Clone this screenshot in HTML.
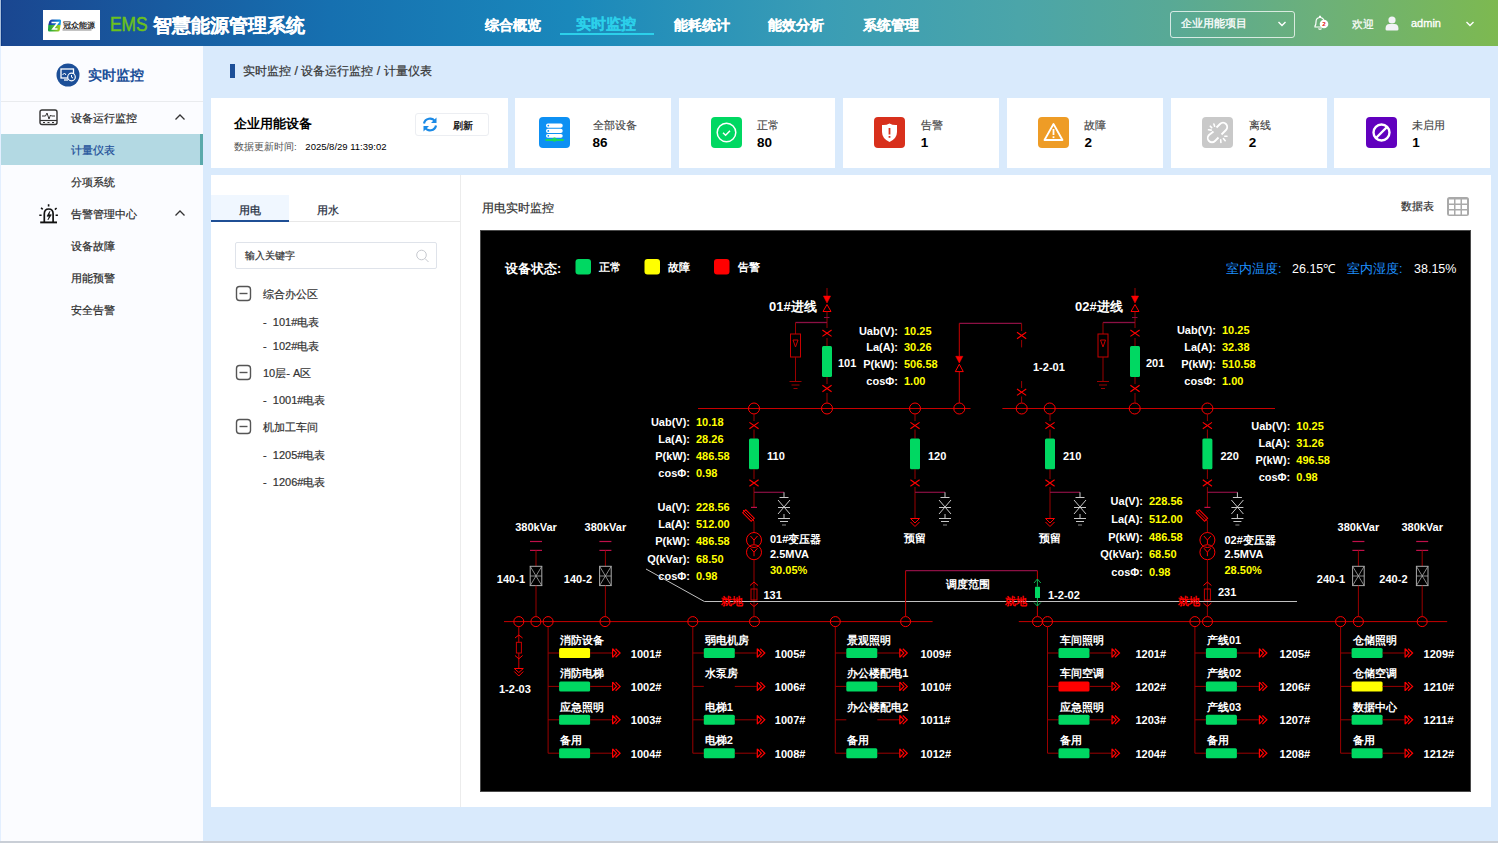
<!DOCTYPE html><html><head><meta charset="utf-8"><style>
*{box-sizing:border-box;margin:0;padding:0}
html,body{width:1498px;height:843px;overflow:hidden}
body{position:relative;background:#d9eafc;font-family:"Liberation Sans",sans-serif;color:#333}
.a{position:absolute;white-space:nowrap}
#hdr{left:0;top:0;width:1498px;height:46px;background:linear-gradient(90deg,#1a4690 0%,#1670b0 22%,#1a88bb 38%,#3a9db5 55%,#4ba5a9 68%,#58a996 78%,#6cb07a 88%,#7db950 100%)}
.nav{top:16px;font-size:14px;font-weight:bold;color:#fff;line-height:18px;-webkit-text-stroke:0.2px currentColor}
#side{left:0;top:46px;width:203px;height:796px;background:#fbfcff;border-left:1px solid #e3efff}
.mi{left:71px;font-size:10.6px;color:#2a2a2a;line-height:14px;-webkit-text-stroke:0.2px currentColor}
.card{background:#fff;top:98px;height:69.5px}
.clab{font-size:11px;color:#444;line-height:13px;-webkit-text-stroke:0.15px currentColor}
.cval{font-size:13.5px;font-weight:bold;color:#000;line-height:15px}
.ico{width:31px;height:31px;border-radius:4px;top:19px;left:24px}
.tree{font-size:11px;color:#333;line-height:13px;-webkit-text-stroke:0.2px currentColor}
</style></head><body><div id="hdr" class="a">
<div class="a" style="left:43px;top:10px;width:57px;height:30px;background:#fff"></div>
<svg class="a" style="left:42px;top:9px" width="58" height="32" viewBox="0 0 58 32">
<defs><linearGradient id="lgb" x1="0" x2="1"><stop offset="0" stop-color="#1a2f9a"/><stop offset="1" stop-color="#12a0e8"/></linearGradient>
<linearGradient id="lgg" x1="0" x2="1"><stop offset="0" stop-color="#10a040"/><stop offset="1" stop-color="#a8d020"/></linearGradient></defs>
<path d="M8.5 11 Q9 10.5 10 10.5 L18 10.5 Q19.2 10.5 19 12 L18.6 16 L6.3 16 L7.2 12.5 Z" fill="url(#lgb)"/>
<path d="M6.3 16 L18.6 16 L17.8 21 Q17.5 22.5 16 22.5 L7.5 22.5 Q5.8 22.5 6 21 Z" fill="url(#lgg)"/>
<path d="M9.5 13.5 L16 13.5 L11 20 L15.5 20" stroke="#fff" stroke-width="1.7" fill="none"/>
<text x="20.5" y="19" font-size="7.6" font-weight="bold" fill="#2a2a2a" letter-spacing="0.3">冠众能源</text>
<rect x="20.5" y="20.4" width="29" height="1.1" fill="#8a8a8a"/>
</svg>
<div class="a" style="left:110px;top:12px;font-size:20px;line-height:24px;color:#6cc11c;-webkit-text-stroke:0.5px #6cc11c;transform:scaleX(0.87);transform-origin:0 0">EMS</div>
<div class="a" style="left:153px;top:14.5px;font-size:18.8px;font-weight:bold;line-height:22px;color:#fff;-webkit-text-stroke:0.15px #fff">智慧能源管理系统</div>
<div class="a nav" style="left:485px">综合概览</div>
<div class="a nav" style="left:576px;color:#2cd0ea;font-size:15.2px;top:15px">实时监控</div>
<div class="a nav" style="left:674px">能耗统计</div>
<div class="a nav" style="left:768px">能效分析</div>
<div class="a nav" style="left:863px">系统管理</div>
<div class="a" style="left:560px;top:33px;width:94px;height:2px;background:#2cd0ea"></div>
<div class="a" style="left:1170px;top:11px;width:125px;height:27px;border:1px solid rgba(255,255,255,0.75);border-radius:3px"></div>
<div class="a" style="left:1181px;top:16px;font-size:11px;color:#fff;line-height:14px;-webkit-text-stroke:0.3px #fff">企业用能项目</div>
<svg class="a" style="left:1277px;top:20px" width="10" height="8"><path d="M1.5 2 L5 5.5 L8.5 2" stroke="#fff" stroke-width="1.4" fill="none"/></svg>
<svg class="a" style="left:1312px;top:14px" width="18" height="18" viewBox="0 0 18 18">
<path d="M3 13 L3 12 Q4 11 4 8 Q4 4 7.5 3.5 L7.5 2.5 Q8 2 8.5 2.5 L8.5 3.5 Q12 4 12 8 Q12 11 13 12 L13 13 Z" fill="none" stroke="#fff" stroke-width="1.2"/>
<path d="M6.5 14.5 Q8 16 9.5 14.5" stroke="#fff" stroke-width="1.1" fill="none"/>
<circle cx="12" cy="10" r="4.3" fill="#fff"/>
<text x="12" y="12.2" font-size="6.2" font-weight="bold" fill="#e01010" text-anchor="middle" font-family="Liberation Sans">2</text>
</svg>
<div class="a" style="left:1352px;top:17px;font-size:11px;color:#fff;line-height:14px;-webkit-text-stroke:0.2px #fff">欢迎</div>
<svg class="a" style="left:1385px;top:16px" width="14" height="15" viewBox="0 0 14 15">
<circle cx="7" cy="4" r="3.6" fill="#f2f2f7"/>
<path d="M0.5 13 Q0.5 8 4.5 8 L9.5 8 Q13.5 8 13.5 13 Q13.5 14.5 12 14.5 L2 14.5 Q0.5 14.5 0.5 13 Z" fill="#f2f2f7"/>
</svg>
<div class="a" style="left:1411px;top:16px;font-size:11px;color:#fff;line-height:14px;-webkit-text-stroke:0.3px #fff">admin</div>
<svg class="a" style="left:1465px;top:20px" width="10" height="8"><path d="M1.5 2 L5 5.5 L8.5 2" stroke="#fff" stroke-width="1.4" fill="none"/></svg>
<div class="a" style="left:0;top:0;width:1px;height:46px;background:#a9bedb"></div><div class="a" style="left:1px;top:0;width:1px;height:46px;background:#0d3a86"></div>
</div>
<div id="side" class="a">
</div>
<div class="a" style="left:1px;top:101px;width:202px;height:1px;background:#e9ebee"></div>
<svg class="a" style="left:55.7px;top:63px" width="24" height="24" viewBox="0 0 24 24">
<circle cx="12" cy="12" r="11.5" fill="#1c4f98"/>
<rect x="5" y="6" width="12.5" height="9" fill="none" stroke="#fff" stroke-width="1.3"/>
<path d="M6.5 12 L8.5 10 L10 12" stroke="#fff" stroke-width="1" fill="none"/>
<path d="M8 17 L12 17" stroke="#fff" stroke-width="1.3"/>
<circle cx="15.5" cy="14" r="3.8" fill="#1c4f98" stroke="#fff" stroke-width="1.2"/>
<path d="M15.5 12 L15.5 14.2 L17 15" stroke="#fff" stroke-width="1" fill="none"/>
</svg>
<div class="a" style="left:88px;top:67px;font-size:14px;font-weight:bold;color:#1c4f98;line-height:17px">实时监控</div>
<svg class="a" style="left:39px;top:109px" width="20" height="17" viewBox="0 0 20 17">
<rect x="1" y="1" width="17" height="14.5" rx="2" fill="none" stroke="#333" stroke-width="1.4"/>
<path d="M3 7 L6.5 7 L8 4 L10 10 L11.5 6 L12.5 7 L16 7" stroke="#333" stroke-width="1" fill="none"/>
<path d="M1 11.5 L18 11.5" stroke="#333" stroke-width="1.2"/>
<path d="M4 13.5 L6 13.5 M8.5 13.5 L10.5 13.5 M13 13.5 L15 13.5" stroke="#333" stroke-width="1"/>
</svg>
<div class="a mi" style="top:111px">设备运行监控</div>
<svg class="a" style="left:174px;top:113px" width="12" height="9"><path d="M1.5 6.5 L6 2 L10.5 6.5" stroke="#333" stroke-width="1.3" fill="none"/></svg>
<div class="a" style="left:1px;top:134px;width:199px;height:31px;background:#b3d9e3"></div>
<div class="a" style="left:200px;top:134px;width:3px;height:31px;background:#5aa9ab"></div>
<div class="a mi" style="top:143px;color:#1d4d97">计量仪表</div>
<div class="a mi" style="top:175px">分项系统</div>
<svg class="a" style="left:39px;top:204px" width="20" height="20" viewBox="0 0 20 20">
<path d="M5.3 18 L5.3 10 Q5.3 5 9.7 5 Q14.1 5 14.1 10 L14.1 18" fill="none" stroke="#111" stroke-width="1.7"/>
<path d="M1.2 18.4 L18 18.4" stroke="#111" stroke-width="1.9"/>
<path d="M10.8 7.4 L8 12.2 L10.4 12.2 L9 15.8 L12.3 10.8 L9.9 10.8 Z" fill="#111" stroke="#111" stroke-width="0.7" stroke-linejoin="round"/>
<path d="M9.6 0.3 L9.6 2.5 M2.1 3.8 L3.7 5.4 M17.6 4 L15.9 5.6 M0.3 11.3 L2.6 11.3 M16.6 11.3 L18.9 11.3" stroke="#111" stroke-width="1.6"/>
</svg>
<div class="a mi" style="top:207px">告警管理中心</div>
<svg class="a" style="left:174px;top:209px" width="12" height="9"><path d="M1.5 6.5 L6 2 L10.5 6.5" stroke="#333" stroke-width="1.3" fill="none"/></svg>
<div class="a mi" style="top:239px">设备故障</div>
<div class="a mi" style="top:271px">用能预警</div>
<div class="a mi" style="top:303px">安全告警</div>
<div class="a" style="left:0;top:841px;width:1498px;height:2px;background:#c9ced6"></div>
<div class="a" style="left:230px;top:64px;width:5px;height:14px;background:#1c4f98"></div>
<div class="a" style="left:243px;top:64px;font-size:12.4px;color:#333;line-height:15px;-webkit-text-stroke:0.2px #333">实时监控 / 设备运行监控 / 计量仪表</div>
<div class="a card" style="left:211px;width:297px">
<div class="a" style="left:23px;top:19px;font-size:12.5px;font-weight:bold;color:#000;line-height:15px">企业用能设备</div>
<div class="a" style="left:23px;top:43px;font-size:9.6px;color:#555;line-height:12px">数据更新时间: <span style="color:#000;font-size:9.5px;margin-left:6px">2025/8/29 11:39:02</span></div>
<div class="a" style="left:204px;top:15px;width:74px;height:23px;border:1px solid #eceef2;border-radius:3px"></div>
<svg class="a" style="left:211px;top:19px" width="16" height="15" viewBox="0 0 16 15">
<path d="M2 6.5 A6 6 0 0 1 13 4.5" stroke="#1b8ae6" stroke-width="2.2" fill="none"/>
<path d="M14.5 0.5 L14.5 6 L9 6 Z" fill="#1b8ae6"/>
<path d="M14 8.5 A6 6 0 0 1 3 10.5" stroke="#1b8ae6" stroke-width="2.2" fill="none"/>
<path d="M1.5 14.5 L1.5 9 L7 9 Z" fill="#1b8ae6"/>
</svg>
<div class="a" style="left:242px;top:22px;font-size:9.6px;font-weight:bold;color:#222;line-height:12px">刷新</div>
</div>
<div class="a card" style="left:515px;width:156px"></div>
<svg class="a" style="left:538.6px;top:117px;background:#0d90f3;border-radius:4px" width="31" height="31" viewBox="0 0 31 31"><rect x="7" y="6.5" width="16.7" height="4.3" rx="2" fill="#fff"/><rect x="7" y="11.8" width="16.7" height="4.2" rx="2" fill="#fff"/><rect x="7" y="16.9" width="16.7" height="3.9" rx="1.8" fill="#fff"/>
<circle cx="9.3" cy="8.6" r="0.9" fill="#0d90f3"/><circle cx="9.3" cy="13.9" r="0.9" fill="#0d90f3"/><circle cx="9.3" cy="18.8" r="0.9" fill="#0d90f3"/>
<rect x="6.5" y="22" width="18.2" height="2" fill="#19d660"/><circle cx="15.5" cy="22.6" r="2.2" fill="#19d660"/></svg>
<div class="a clab" style="left:592.5px;top:119px">全部设备</div>
<div class="a cval" style="left:592.5px;top:134.5px">86</div>
<div class="a card" style="left:679px;width:156px"></div>
<svg class="a" style="left:710.5px;top:117px;background:#00d862;border-radius:4px" width="31" height="31" viewBox="0 0 31 31"><circle cx="15.5" cy="15.5" r="9.3" fill="none" stroke="#fff" stroke-width="1.5"/><path d="M12 15.8 L14.6 18.2 L19 13.8" fill="none" stroke="#fff" stroke-width="1.5"/></svg>
<div class="a clab" style="left:757px;top:119px">正常</div>
<div class="a cval" style="left:757px;top:134.5px">80</div>
<div class="a card" style="left:843px;width:156px"></div>
<svg class="a" style="left:873.8px;top:117px;background:#d8301c;border-radius:4px" width="31" height="31" viewBox="0 0 31 31"><path d="M15.5 6.5 Q19 8.5 23 8 L23 15 Q23 21.5 15.5 25 Q8 21.5 8 15 L8 8 Q12 8.5 15.5 6.5 Z" fill="#fff"/><rect x="14.6" y="11" width="1.8" height="6.5" fill="#d8301c"/><rect x="14.6" y="19" width="1.8" height="1.8" fill="#d8301c"/></svg>
<div class="a clab" style="left:920.8px;top:119px">告警</div>
<div class="a cval" style="left:920.8px;top:134.5px">1</div>
<div class="a card" style="left:1006.5px;width:156px"></div>
<svg class="a" style="left:1038px;top:117px;background:#ee9c26;border-radius:4px" width="31" height="31" viewBox="0 0 31 31"><path d="M15.5 7 L24.5 23 L6.5 23 Z" fill="none" stroke="#fff" stroke-width="1.8" stroke-linejoin="round"/><rect x="14.6" y="12" width="1.8" height="6" fill="#fff"/><rect x="14.6" y="19.3" width="1.8" height="1.8" fill="#fff"/></svg>
<div class="a clab" style="left:1084.4px;top:119px">故障</div>
<div class="a cval" style="left:1084.4px;top:134.5px">2</div>
<div class="a card" style="left:1170.5px;width:156px"></div>
<svg class="a" style="left:1201.8px;top:117px;background:#c9c9c9;border-radius:4px" width="31" height="31" viewBox="0 0 31 31"><path d="M14.5 10.5 L18 7 A4.2 4.2 0 0 1 24 13 L19.5 17.5 M11.5 14.5 L7 18 A4.2 4.2 0 0 0 13 24 L16.5 20.5" fill="none" stroke="#fff" stroke-width="1.8"/><path d="M8.3 9.2 L9.7 10.6 M11.9 7 L12.6 9.2 M6.5 12.8 L9.2 13.1 M22.8 19.2 L25 19.2 M21.4 21.6 L23.2 23.7 M18.7 22.8 L18.9 25.5" stroke="#fff" stroke-width="1.6" stroke-linecap="round"/></svg>
<div class="a clab" style="left:1248.8px;top:119px">离线</div>
<div class="a cval" style="left:1248.8px;top:134.5px">2</div>
<div class="a card" style="left:1334px;width:156px"></div>
<svg class="a" style="left:1365.7px;top:117px;background:#6100be;border-radius:4px" width="31" height="31" viewBox="0 0 31 31"><circle cx="15.5" cy="15.5" r="8" fill="none" stroke="#fff" stroke-width="2.4"/><path d="M10 21 L21 10" stroke="#fff" stroke-width="2.4"/></svg>
<div class="a clab" style="left:1412.2px;top:119px">未启用</div>
<div class="a cval" style="left:1412.2px;top:134.5px">1</div>
<div class="a" style="left:211px;top:175px;width:1280px;height:632px;background:#fff"></div>
<div class="a" style="left:460px;top:175px;width:1px;height:632px;background:#ececec"></div>
<div class="a" style="left:211px;top:195px;width:78px;height:27px;background:#f0f7ff"></div>
<div class="a" style="left:211px;top:221px;width:249px;height:1px;background:#e8e8e8"></div>
<div class="a" style="left:211px;top:220px;width:78px;height:2px;background:#1f4f95"></div>
<div class="a" style="left:239px;top:204px;font-size:11px;color:#1f2d3d;line-height:13px;-webkit-text-stroke:0.25px #1f2d3d">用电</div>
<div class="a" style="left:317px;top:204px;font-size:11px;color:#1f2d3d;line-height:13px;-webkit-text-stroke:0.25px #1f2d3d">用水</div>
<div class="a" style="left:235px;top:242px;width:202px;height:27px;border:1px solid #dfe3ea;border-radius:2px"></div>
<div class="a" style="left:245px;top:250px;font-size:10px;color:#333;line-height:12px;-webkit-text-stroke:0.2px #333">输入关键字</div>
<svg class="a" style="left:415px;top:249px" width="15" height="14"><circle cx="6.5" cy="6" r="4.8" fill="none" stroke="#c6c9cf" stroke-width="1"/><path d="M10 9.5 L13.5 13" stroke="#c6c9cf" stroke-width="1"/></svg>
<svg class="a" style="left:235px;top:285px" width="17" height="17"><rect x="1.5" y="1.5" width="14" height="14" rx="3" fill="none" stroke="#555" stroke-width="1.4"/><path d="M4.5 8.5 L12.5 8.5" stroke="#555" stroke-width="1.4"/></svg>
<div class="a tree" style="left:263px;top:287.5px">综合办公区</div>
<div class="a tree" style="left:263px;top:315.5px">-&nbsp; 101#电表</div>
<div class="a tree" style="left:263px;top:339.5px">-&nbsp; 102#电表</div>
<svg class="a" style="left:235px;top:364px" width="17" height="17"><rect x="1.5" y="1.5" width="14" height="14" rx="3" fill="none" stroke="#555" stroke-width="1.4"/><path d="M4.5 8.5 L12.5 8.5" stroke="#555" stroke-width="1.4"/></svg>
<div class="a tree" style="left:263px;top:366.5px">10层- A区</div>
<div class="a tree" style="left:263px;top:393.5px">-&nbsp; 1001#电表</div>
<svg class="a" style="left:235px;top:418px" width="17" height="17"><rect x="1.5" y="1.5" width="14" height="14" rx="3" fill="none" stroke="#555" stroke-width="1.4"/><path d="M4.5 8.5 L12.5 8.5" stroke="#555" stroke-width="1.4"/></svg>
<div class="a tree" style="left:263px;top:420.5px">机加工车间</div>
<div class="a tree" style="left:263px;top:448.5px">-&nbsp; 1205#电表</div>
<div class="a tree" style="left:263px;top:475.5px">-&nbsp; 1206#电表</div>
<div class="a" style="left:482px;top:201px;font-size:12px;color:#333;line-height:15px;-webkit-text-stroke:0.2px #333">用电实时监控</div>
<div class="a" style="left:1401px;top:200px;font-size:10.5px;color:#333;line-height:13px;-webkit-text-stroke:0.2px #333">数据表</div>
<svg class="a" style="left:1446px;top:196px" width="25" height="22" viewBox="0 0 25 22">
<rect x="1" y="1" width="22" height="19" rx="2.5" fill="#a9a9a9"/>
<g fill="#fff"><rect x="3" y="3.5" width="5" height="4"/><rect x="9.5" y="3.5" width="5" height="4"/><rect x="16" y="3.5" width="5" height="4"/>
<rect x="3" y="9" width="5" height="4"/><rect x="9.5" y="9" width="5" height="4"/><rect x="16" y="9" width="5" height="4"/>
<rect x="3" y="14.5" width="5" height="4"/><rect x="9.5" y="14.5" width="5" height="4"/><rect x="16" y="14.5" width="5" height="4"/></g>
</svg>
<div class="a" style="left:480px;top:230px;width:991px;height:562px;border:1px solid #4a4a4a;background:#000"></div>
<svg class="a" style="left:480px;top:230px" width="991" height="562" viewBox="480 230 991 562" font-family="Liberation Sans, sans-serif">
<text x="505" y="273" fill="#fff" font-size="12.5" text-anchor="start" font-weight="bold">设备状态:</text>
<rect x="575.5" y="259" width="15.5" height="15.5" rx="3" fill="#00d862"/>
<text x="599" y="271" fill="#fff" font-size="11" text-anchor="start" font-weight="bold">正常</text>
<rect x="644.5" y="259" width="15.5" height="15.5" rx="3" fill="#ffff00"/>
<text x="668" y="271" fill="#fff" font-size="11" text-anchor="start" font-weight="bold">故障</text>
<rect x="714" y="259" width="15.5" height="15.5" rx="3" fill="#ff0000"/>
<text x="738" y="271" fill="#fff" font-size="11" text-anchor="start" font-weight="bold">告警</text>
<text x="1226" y="273" fill="#1e90ff" font-size="12.5" text-anchor="start" font-weight="normal">室内温度:</text>
<text x="1292" y="273" fill="#fff" font-size="12.5" text-anchor="start" font-weight="normal">26.15℃</text>
<text x="1347" y="273" fill="#1e90ff" font-size="12.5" text-anchor="start" font-weight="normal">室内湿度:</text>
<text x="1414" y="273" fill="#fff" font-size="12.5" text-anchor="start" font-weight="normal">38.15%</text>
<line x1="698" y1="408.5" x2="970.5" y2="408.5" stroke="#c80000" stroke-width="1"/>
<line x1="1002.4" y1="408.5" x2="1275" y2="408.5" stroke="#c80000" stroke-width="1"/>
<circle cx="754" cy="408.5" r="5.5" fill="none" stroke="#ff0000" stroke-width="1"/>
<circle cx="827" cy="408.5" r="5.5" fill="none" stroke="#ff0000" stroke-width="1"/>
<circle cx="915" cy="408.5" r="5.5" fill="none" stroke="#ff0000" stroke-width="1"/>
<circle cx="959.3" cy="408.5" r="5.5" fill="none" stroke="#ff0000" stroke-width="1"/>
<circle cx="1021.7" cy="408.5" r="5.5" fill="none" stroke="#ff0000" stroke-width="1"/>
<circle cx="1049.7" cy="408.5" r="5.5" fill="none" stroke="#ff0000" stroke-width="1"/>
<circle cx="1134.7" cy="408.5" r="5.5" fill="none" stroke="#ff0000" stroke-width="1"/>
<circle cx="1207.4" cy="408.5" r="5.5" fill="none" stroke="#ff0000" stroke-width="1"/>
<line x1="827" y1="288" x2="827" y2="296" stroke="#9a0000" stroke-width="1"/>
<path d="M823.4 296 L830.6 296 L827 303 Z" stroke="#ff0000" fill="#ff0000" stroke-width="0.5"/>
<path d="M827 304.5 L823 311.5 L831 311.5 Z" stroke="#ff0000" fill="none" stroke-width="1"/>
<line x1="827" y1="311.5" x2="827" y2="328" stroke="#9a0000" stroke-width="1"/>
<line x1="824" y1="317.5" x2="829.5" y2="317.5" stroke="#8c1044" stroke-width="1"/>
<line x1="795.5" y1="322.5" x2="827" y2="322.5" stroke="#8c1044" stroke-width="1.3"/>
<line x1="795.5" y1="322.5" x2="795.5" y2="334" stroke="#9a0000" stroke-width="1"/>
<rect x="790.5" y="334" width="10" height="23" fill="none" stroke="#c80000" stroke-width="1"/>
<path d="M793.0 340 L798.0 340 L795.5 347 Z" stroke="#c80000" fill="none" stroke-width="1"/>
<line x1="795.5" y1="357" x2="795.5" y2="381" stroke="#9a0000" stroke-width="1"/>
<line x1="789.5" y1="381.5" x2="801.5" y2="381.5" stroke="#9a0000" stroke-width="1"/>
<line x1="791.5" y1="385" x2="799.5" y2="385" stroke="#9a0000" stroke-width="1"/>
<line x1="793.5" y1="388.5" x2="797.5" y2="388.5" stroke="#9a0000" stroke-width="1"/>
<path d="M822.4 330.0 L831.6 336.4 M822.4 336.4 L831.6 330.0" stroke="#ff0000" stroke-width="1.1"/>
<line x1="827" y1="338" x2="827" y2="346" stroke="#9a0000" stroke-width="1"/>
<rect x="822" y="346" width="10" height="31" rx="1.5" fill="#00d862"/>
<line x1="827" y1="377" x2="827" y2="384" stroke="#9a0000" stroke-width="1"/>
<path d="M822.4 385.3 L831.6 391.7 M822.4 391.7 L831.6 385.3" stroke="#ff0000" stroke-width="1.1"/>
<line x1="827" y1="393" x2="827" y2="403" stroke="#9a0000" stroke-width="1"/>
<text x="769" y="311" fill="#fff" font-size="13" text-anchor="start" font-weight="bold">01#进线</text>
<text x="838" y="366.5" fill="#fff" font-size="11" text-anchor="start" font-weight="bold">101</text>
<line x1="1135" y1="288" x2="1135" y2="296" stroke="#9a0000" stroke-width="1"/>
<path d="M1131.4 296 L1138.6 296 L1135 303 Z" stroke="#ff0000" fill="#ff0000" stroke-width="0.5"/>
<path d="M1135 304.5 L1131 311.5 L1139 311.5 Z" stroke="#ff0000" fill="none" stroke-width="1"/>
<line x1="1135" y1="311.5" x2="1135" y2="328" stroke="#9a0000" stroke-width="1"/>
<line x1="1132" y1="317.5" x2="1137.5" y2="317.5" stroke="#8c1044" stroke-width="1"/>
<line x1="1103" y1="322.5" x2="1135" y2="322.5" stroke="#8c1044" stroke-width="1.3"/>
<line x1="1103" y1="322.5" x2="1103" y2="334" stroke="#9a0000" stroke-width="1"/>
<rect x="1098" y="334" width="10" height="23" fill="none" stroke="#c80000" stroke-width="1"/>
<path d="M1100.5 340 L1105.5 340 L1103 347 Z" stroke="#c80000" fill="none" stroke-width="1"/>
<line x1="1103" y1="357" x2="1103" y2="381" stroke="#9a0000" stroke-width="1"/>
<line x1="1097" y1="381.5" x2="1109" y2="381.5" stroke="#9a0000" stroke-width="1"/>
<line x1="1099" y1="385" x2="1107" y2="385" stroke="#9a0000" stroke-width="1"/>
<line x1="1101" y1="388.5" x2="1105" y2="388.5" stroke="#9a0000" stroke-width="1"/>
<path d="M1130.4 330.0 L1139.6 336.4 M1130.4 336.4 L1139.6 330.0" stroke="#ff0000" stroke-width="1.1"/>
<line x1="1135" y1="338" x2="1135" y2="346" stroke="#9a0000" stroke-width="1"/>
<rect x="1130" y="346" width="10" height="31" rx="1.5" fill="#00d862"/>
<line x1="1135" y1="377" x2="1135" y2="384" stroke="#9a0000" stroke-width="1"/>
<path d="M1130.4 385.3 L1139.6 391.7 M1130.4 391.7 L1139.6 385.3" stroke="#ff0000" stroke-width="1.1"/>
<line x1="1135" y1="393" x2="1135" y2="403" stroke="#9a0000" stroke-width="1"/>
<text x="1075" y="311" fill="#fff" font-size="13" text-anchor="start" font-weight="bold">02#进线</text>
<text x="1146" y="366.5" fill="#fff" font-size="11" text-anchor="start" font-weight="bold">201</text>
<line x1="959.3" y1="323.4" x2="1021.6" y2="323.4" stroke="#8c1044" stroke-width="1.3"/>
<line x1="959.3" y1="323.4" x2="959.3" y2="356" stroke="#c80000" stroke-width="1"/>
<path d="M955.7 356.3 L962.9 356.3 L959.3 363 Z" stroke="#ff0000" fill="#ff0000" stroke-width="0.5"/>
<path d="M959.3 364.2 L955.3 371.6 L963.3 371.6 Z" stroke="#ff0000" fill="none" stroke-width="1"/>
<line x1="959.3" y1="371.6" x2="959.3" y2="403" stroke="#c80000" stroke-width="1"/>
<line x1="1021.6" y1="323.4" x2="1021.6" y2="331" stroke="#9a0000" stroke-width="1"/>
<path d="M1017.0 332.3 L1026.2 338.7 M1017.0 338.7 L1026.2 332.3" stroke="#ff0000" stroke-width="1.1"/>
<line x1="1021.6" y1="340" x2="1021.6" y2="347.4" stroke="#9a0000" stroke-width="1"/>
<line x1="1021.6" y1="381" x2="1021.6" y2="388" stroke="#9a0000" stroke-width="1"/>
<path d="M1017.0 389.0 L1026.2 395.4 M1017.0 395.4 L1026.2 389.0" stroke="#ff0000" stroke-width="1.1"/>
<line x1="1021.6" y1="396.5" x2="1021.6" y2="403" stroke="#9a0000" stroke-width="1"/>
<text x="1033" y="370.5" fill="#fff" font-size="11" text-anchor="start" font-weight="bold">1-2-01</text>
<text x="898" y="334.5" fill="#fff" font-size="11" text-anchor="end" font-weight="bold">Uab(V):</text>
<text x="904" y="334.5" fill="#ffff00" font-size="11" text-anchor="start" font-weight="bold">10.25</text>
<text x="898" y="351.2" fill="#fff" font-size="11" text-anchor="end" font-weight="bold">La(A):</text>
<text x="904" y="351.2" fill="#ffff00" font-size="11" text-anchor="start" font-weight="bold">30.26</text>
<text x="898" y="368" fill="#fff" font-size="11" text-anchor="end" font-weight="bold">P(kW):</text>
<text x="904" y="368" fill="#ffff00" font-size="11" text-anchor="start" font-weight="bold">506.58</text>
<text x="898" y="384.5" fill="#fff" font-size="11" text-anchor="end" font-weight="bold">cosΦ:</text>
<text x="904" y="384.5" fill="#ffff00" font-size="11" text-anchor="start" font-weight="bold">1.00</text>
<text x="1216" y="334.3" fill="#fff" font-size="11" text-anchor="end" font-weight="bold">Uab(V):</text>
<text x="1222" y="334.3" fill="#ffff00" font-size="11" text-anchor="start" font-weight="bold">10.25</text>
<text x="1216" y="351.4" fill="#fff" font-size="11" text-anchor="end" font-weight="bold">La(A):</text>
<text x="1222" y="351.4" fill="#ffff00" font-size="11" text-anchor="start" font-weight="bold">32.38</text>
<text x="1216" y="368" fill="#fff" font-size="11" text-anchor="end" font-weight="bold">P(kW):</text>
<text x="1222" y="368" fill="#ffff00" font-size="11" text-anchor="start" font-weight="bold">510.58</text>
<text x="1216" y="385" fill="#fff" font-size="11" text-anchor="end" font-weight="bold">cosΦ:</text>
<text x="1222" y="385" fill="#ffff00" font-size="11" text-anchor="start" font-weight="bold">1.00</text>
<text x="690" y="426.2" fill="#fff" font-size="11" text-anchor="end" font-weight="bold">Uab(V):</text>
<text x="696" y="426.2" fill="#ffff00" font-size="11" text-anchor="start" font-weight="bold">10.18</text>
<text x="690" y="443.2" fill="#fff" font-size="11" text-anchor="end" font-weight="bold">La(A):</text>
<text x="696" y="443.2" fill="#ffff00" font-size="11" text-anchor="start" font-weight="bold">28.26</text>
<text x="690" y="460.1" fill="#fff" font-size="11" text-anchor="end" font-weight="bold">P(kW):</text>
<text x="696" y="460.1" fill="#ffff00" font-size="11" text-anchor="start" font-weight="bold">486.58</text>
<text x="690" y="477.1" fill="#fff" font-size="11" text-anchor="end" font-weight="bold">cosΦ:</text>
<text x="696" y="477.1" fill="#ffff00" font-size="11" text-anchor="start" font-weight="bold">0.98</text>
<text x="690" y="511" fill="#fff" font-size="11" text-anchor="end" font-weight="bold">Ua(V):</text>
<text x="696" y="511" fill="#ffff00" font-size="11" text-anchor="start" font-weight="bold">228.56</text>
<text x="690" y="528" fill="#fff" font-size="11" text-anchor="end" font-weight="bold">La(A):</text>
<text x="696" y="528" fill="#ffff00" font-size="11" text-anchor="start" font-weight="bold">512.00</text>
<text x="690" y="545" fill="#fff" font-size="11" text-anchor="end" font-weight="bold">P(kW):</text>
<text x="696" y="545" fill="#ffff00" font-size="11" text-anchor="start" font-weight="bold">486.58</text>
<text x="690" y="562.7" fill="#fff" font-size="11" text-anchor="end" font-weight="bold">Q(kVar):</text>
<text x="696" y="562.7" fill="#ffff00" font-size="11" text-anchor="start" font-weight="bold">68.50</text>
<text x="690" y="580.2" fill="#fff" font-size="11" text-anchor="end" font-weight="bold">cosΦ:</text>
<text x="696" y="580.2" fill="#ffff00" font-size="11" text-anchor="start" font-weight="bold">0.98</text>
<text x="1290.3" y="430.2" fill="#fff" font-size="11" text-anchor="end" font-weight="bold">Uab(V):</text>
<text x="1296.3" y="430.2" fill="#ffff00" font-size="11" text-anchor="start" font-weight="bold">10.25</text>
<text x="1290.3" y="447.2" fill="#fff" font-size="11" text-anchor="end" font-weight="bold">La(A):</text>
<text x="1296.3" y="447.2" fill="#ffff00" font-size="11" text-anchor="start" font-weight="bold">31.26</text>
<text x="1290.3" y="464.2" fill="#fff" font-size="11" text-anchor="end" font-weight="bold">P(kW):</text>
<text x="1296.3" y="464.2" fill="#ffff00" font-size="11" text-anchor="start" font-weight="bold">496.58</text>
<text x="1290.3" y="481.1" fill="#fff" font-size="11" text-anchor="end" font-weight="bold">cosΦ:</text>
<text x="1296.3" y="481.1" fill="#ffff00" font-size="11" text-anchor="start" font-weight="bold">0.98</text>
<text x="1143" y="505.3" fill="#fff" font-size="11" text-anchor="end" font-weight="bold">Ua(V):</text>
<text x="1149" y="505.3" fill="#ffff00" font-size="11" text-anchor="start" font-weight="bold">228.56</text>
<text x="1143" y="523.3" fill="#fff" font-size="11" text-anchor="end" font-weight="bold">La(A):</text>
<text x="1149" y="523.3" fill="#ffff00" font-size="11" text-anchor="start" font-weight="bold">512.00</text>
<text x="1143" y="541" fill="#fff" font-size="11" text-anchor="end" font-weight="bold">P(kW):</text>
<text x="1149" y="541" fill="#ffff00" font-size="11" text-anchor="start" font-weight="bold">486.58</text>
<text x="1143" y="558" fill="#fff" font-size="11" text-anchor="end" font-weight="bold">Q(kVar):</text>
<text x="1149" y="558" fill="#ffff00" font-size="11" text-anchor="start" font-weight="bold">68.50</text>
<text x="1143" y="575.8" fill="#fff" font-size="11" text-anchor="end" font-weight="bold">cosΦ:</text>
<text x="1149" y="575.8" fill="#ffff00" font-size="11" text-anchor="start" font-weight="bold">0.98</text>
<line x1="754" y1="414" x2="754" y2="421" stroke="#9a0000" stroke-width="1"/>
<path d="M749.4 422.40000000000003 L758.6 428.8 M749.4 428.8 L758.6 422.40000000000003" stroke="#ff0000" stroke-width="1.1"/>
<line x1="754" y1="429.5" x2="754" y2="438.6" stroke="#9a0000" stroke-width="1"/>
<rect x="749" y="438.6" width="10" height="30.6" rx="1.5" fill="#00d862"/>
<line x1="754" y1="469.2" x2="754" y2="479" stroke="#9a0000" stroke-width="1"/>
<path d="M749.4 479.8 L758.6 486.2 M749.4 486.2 L758.6 479.8" stroke="#ff0000" stroke-width="1.1"/>
<line x1="754" y1="487" x2="754" y2="507.4" stroke="#9a0000" stroke-width="1"/>
<line x1="754" y1="492.3" x2="784" y2="492.3" stroke="#8c1044" stroke-width="1.2"/>
<line x1="784" y1="492.3" x2="784" y2="497.5" stroke="#c8c8c8" stroke-width="1"/>
<line x1="779.5" y1="497.5" x2="788.5" y2="497.5" stroke="#c8c8c8" stroke-width="1"/>
<path d="M778 500 L790 514 M778 514 L790 500 M778 507.5 L790 507.5" stroke="#c8c8c8" fill="none" stroke-width="1"/>
<line x1="784" y1="514" x2="784" y2="518.5" stroke="#c8c8c8" stroke-width="1"/>
<line x1="778" y1="518.5" x2="790" y2="518.5" stroke="#c8c8c8" stroke-width="1"/>
<line x1="780" y1="521.5" x2="788" y2="521.5" stroke="#c8c8c8" stroke-width="1"/>
<line x1="782" y1="525" x2="786" y2="525" stroke="#888" stroke-width="1"/>
<text x="767" y="460" fill="#fff" font-size="11" text-anchor="start" font-weight="bold">110</text>
<line x1="751" y1="507.4" x2="757" y2="507.4" stroke="#c0104a" stroke-width="1.2"/>
<line x1="743" y1="510" x2="754" y2="521" stroke="#ff0000" stroke-width="1"/>
<rect x="-6" y="-2.2" width="12" height="4.4" fill="none" stroke="#ff0000" stroke-width="1" transform="translate(748.5,515.5) rotate(45)"/>
<line x1="754" y1="521" x2="754" y2="532.5" stroke="#9a0000" stroke-width="1"/>
<circle cx="754" cy="540" r="7.5" fill="none" stroke="#ff0000" stroke-width="1"/>
<path d="M750.5 536 L754 540 L757.5 536 M754 540 L754 544" stroke="#ff0000" fill="none" stroke-width="1"/>
<circle cx="754" cy="552.2" r="7.5" fill="none" stroke="#ff0000" stroke-width="1"/>
<path d="M750.5 548.2 L754 552.2 L757.5 548.2 M754 552.2 L754 556.2" stroke="#ff0000" fill="none" stroke-width="1"/>
<line x1="754" y1="559.7" x2="754" y2="616" stroke="#9a0000" stroke-width="1"/>
<path d="M750 585.5 L754 582 L758 585.5" stroke="#ff0000" fill="none" stroke-width="1"/>
<rect x="751" y="589" width="6" height="11" fill="none" stroke="#c80000" stroke-width="1"/>
<path d="M750 603 L754 606.5 L758 603" stroke="#ff0000" fill="none" stroke-width="1"/>
<line x1="915" y1="414" x2="915" y2="421" stroke="#9a0000" stroke-width="1"/>
<path d="M910.4 422.40000000000003 L919.6 428.8 M910.4 428.8 L919.6 422.40000000000003" stroke="#ff0000" stroke-width="1.1"/>
<line x1="915" y1="429.5" x2="915" y2="438.6" stroke="#9a0000" stroke-width="1"/>
<rect x="910" y="438.6" width="10" height="30.6" rx="1.5" fill="#00d862"/>
<line x1="915" y1="469.2" x2="915" y2="479" stroke="#9a0000" stroke-width="1"/>
<path d="M910.4 479.8 L919.6 486.2 M910.4 486.2 L919.6 479.8" stroke="#ff0000" stroke-width="1.1"/>
<line x1="915" y1="487" x2="915" y2="518" stroke="#9a0000" stroke-width="1"/>
<line x1="915" y1="492.3" x2="945" y2="492.3" stroke="#8c1044" stroke-width="1.2"/>
<line x1="945" y1="492.3" x2="945" y2="497.5" stroke="#c8c8c8" stroke-width="1"/>
<line x1="940.5" y1="497.5" x2="949.5" y2="497.5" stroke="#c8c8c8" stroke-width="1"/>
<path d="M939 500 L951 514 M939 514 L951 500 M939 507.5 L951 507.5" stroke="#c8c8c8" fill="none" stroke-width="1"/>
<line x1="945" y1="514" x2="945" y2="518.5" stroke="#c8c8c8" stroke-width="1"/>
<line x1="939" y1="518.5" x2="951" y2="518.5" stroke="#c8c8c8" stroke-width="1"/>
<line x1="941" y1="521.5" x2="949" y2="521.5" stroke="#c8c8c8" stroke-width="1"/>
<line x1="943" y1="525" x2="947" y2="525" stroke="#888" stroke-width="1"/>
<text x="928" y="460" fill="#fff" font-size="11" text-anchor="start" font-weight="bold">120</text>
<path d="M910.5 518.5 L919.5 518.5 L915 523 Z M910.5 522 L915 526.5 L919.5 522" stroke="#ff0000" fill="none" stroke-width="1"/>
<line x1="1050" y1="414" x2="1050" y2="421" stroke="#9a0000" stroke-width="1"/>
<path d="M1045.4 422.40000000000003 L1054.6 428.8 M1045.4 428.8 L1054.6 422.40000000000003" stroke="#ff0000" stroke-width="1.1"/>
<line x1="1050" y1="429.5" x2="1050" y2="438.6" stroke="#9a0000" stroke-width="1"/>
<rect x="1045" y="438.6" width="10" height="30.6" rx="1.5" fill="#00d862"/>
<line x1="1050" y1="469.2" x2="1050" y2="479" stroke="#9a0000" stroke-width="1"/>
<path d="M1045.4 479.8 L1054.6 486.2 M1045.4 486.2 L1054.6 479.8" stroke="#ff0000" stroke-width="1.1"/>
<line x1="1050" y1="487" x2="1050" y2="518" stroke="#9a0000" stroke-width="1"/>
<line x1="1050" y1="492.3" x2="1080" y2="492.3" stroke="#8c1044" stroke-width="1.2"/>
<line x1="1080" y1="492.3" x2="1080" y2="497.5" stroke="#c8c8c8" stroke-width="1"/>
<line x1="1075.5" y1="497.5" x2="1084.5" y2="497.5" stroke="#c8c8c8" stroke-width="1"/>
<path d="M1074 500 L1086 514 M1074 514 L1086 500 M1074 507.5 L1086 507.5" stroke="#c8c8c8" fill="none" stroke-width="1"/>
<line x1="1080" y1="514" x2="1080" y2="518.5" stroke="#c8c8c8" stroke-width="1"/>
<line x1="1074" y1="518.5" x2="1086" y2="518.5" stroke="#c8c8c8" stroke-width="1"/>
<line x1="1076" y1="521.5" x2="1084" y2="521.5" stroke="#c8c8c8" stroke-width="1"/>
<line x1="1078" y1="525" x2="1082" y2="525" stroke="#888" stroke-width="1"/>
<text x="1063" y="460" fill="#fff" font-size="11" text-anchor="start" font-weight="bold">210</text>
<path d="M1045.5 518.5 L1054.5 518.5 L1050 523 Z M1045.5 522 L1050 526.5 L1054.5 522" stroke="#ff0000" fill="none" stroke-width="1"/>
<line x1="1207.4" y1="414" x2="1207.4" y2="421" stroke="#9a0000" stroke-width="1"/>
<path d="M1202.8000000000002 422.40000000000003 L1212.0 428.8 M1202.8000000000002 428.8 L1212.0 422.40000000000003" stroke="#ff0000" stroke-width="1.1"/>
<line x1="1207.4" y1="429.5" x2="1207.4" y2="438.6" stroke="#9a0000" stroke-width="1"/>
<rect x="1202.4" y="438.6" width="10" height="30.6" rx="1.5" fill="#00d862"/>
<line x1="1207.4" y1="469.2" x2="1207.4" y2="479" stroke="#9a0000" stroke-width="1"/>
<path d="M1202.8000000000002 479.8 L1212.0 486.2 M1202.8000000000002 486.2 L1212.0 479.8" stroke="#ff0000" stroke-width="1.1"/>
<line x1="1207.4" y1="487" x2="1207.4" y2="507.4" stroke="#9a0000" stroke-width="1"/>
<line x1="1207.4" y1="492.3" x2="1237.4" y2="492.3" stroke="#8c1044" stroke-width="1.2"/>
<line x1="1237.4" y1="492.3" x2="1237.4" y2="497.5" stroke="#c8c8c8" stroke-width="1"/>
<line x1="1232.9" y1="497.5" x2="1241.9" y2="497.5" stroke="#c8c8c8" stroke-width="1"/>
<path d="M1231.4 500 L1243.4 514 M1231.4 514 L1243.4 500 M1231.4 507.5 L1243.4 507.5" stroke="#c8c8c8" fill="none" stroke-width="1"/>
<line x1="1237.4" y1="514" x2="1237.4" y2="518.5" stroke="#c8c8c8" stroke-width="1"/>
<line x1="1231.4" y1="518.5" x2="1243.4" y2="518.5" stroke="#c8c8c8" stroke-width="1"/>
<line x1="1233.4" y1="521.5" x2="1241.4" y2="521.5" stroke="#c8c8c8" stroke-width="1"/>
<line x1="1235.4" y1="525" x2="1239.4" y2="525" stroke="#888" stroke-width="1"/>
<text x="1220.4" y="460" fill="#fff" font-size="11" text-anchor="start" font-weight="bold">220</text>
<line x1="1204.4" y1="507.4" x2="1210.4" y2="507.4" stroke="#c0104a" stroke-width="1.2"/>
<line x1="1196.4" y1="510" x2="1207.4" y2="521" stroke="#ff0000" stroke-width="1"/>
<rect x="-6" y="-2.2" width="12" height="4.4" fill="none" stroke="#ff0000" stroke-width="1" transform="translate(1201.9,515.5) rotate(45)"/>
<line x1="1207.4" y1="521" x2="1207.4" y2="532.5" stroke="#9a0000" stroke-width="1"/>
<circle cx="1207.4" cy="540" r="7.5" fill="none" stroke="#ff0000" stroke-width="1"/>
<path d="M1203.9 536 L1207.4 540 L1210.9 536 M1207.4 540 L1207.4 544" stroke="#ff0000" fill="none" stroke-width="1"/>
<circle cx="1207.4" cy="552.2" r="7.5" fill="none" stroke="#ff0000" stroke-width="1"/>
<path d="M1203.9 548.2 L1207.4 552.2 L1210.9 548.2 M1207.4 552.2 L1207.4 556.2" stroke="#ff0000" fill="none" stroke-width="1"/>
<line x1="1207.4" y1="559.7" x2="1207.4" y2="616" stroke="#9a0000" stroke-width="1"/>
<path d="M1203.4 585.5 L1207.4 582 L1211.4 585.5" stroke="#ff0000" fill="none" stroke-width="1"/>
<rect x="1204.4" y="589" width="6" height="11" fill="none" stroke="#c80000" stroke-width="1"/>
<path d="M1203.4 603 L1207.4 606.5 L1211.4 603" stroke="#ff0000" fill="none" stroke-width="1"/>
<text x="903.5" y="541.5" fill="#fff" font-size="11" text-anchor="start" font-weight="bold">预留</text>
<text x="1039" y="541.5" fill="#fff" font-size="11" text-anchor="start" font-weight="bold">预留</text>
<text x="770" y="543" fill="#fff" font-size="11" text-anchor="start" font-weight="bold">01#变压器</text>
<text x="770" y="558" fill="#fff" font-size="11" text-anchor="start" font-weight="bold">2.5MVA</text>
<text x="770" y="574" fill="#ffff00" font-size="11" text-anchor="start" font-weight="bold">30.05%</text>
<text x="1224.5" y="543.5" fill="#fff" font-size="11" text-anchor="start" font-weight="bold">02#变压器</text>
<text x="1224.5" y="558" fill="#fff" font-size="11" text-anchor="start" font-weight="bold">2.5MVA</text>
<text x="1224.5" y="574" fill="#ffff00" font-size="11" text-anchor="start" font-weight="bold">28.50%</text>
<text x="763.5" y="598.5" fill="#fff" font-size="11" text-anchor="start" font-weight="bold">131</text>
<text x="1218" y="596" fill="#fff" font-size="11" text-anchor="start" font-weight="bold">231</text>
<path d="M646 569 L704.4 601.5 L1297 601.5" stroke="#c0c0c0" fill="none" stroke-width="1"/>
<text x="720.5" y="604.5" fill="#ff0000" font-size="11" text-anchor="start" font-weight="bold">就地</text>
<text x="1005" y="605" fill="#ff0000" font-size="11" text-anchor="start" font-weight="bold">就地</text>
<text x="1177.5" y="604.5" fill="#ff0000" font-size="11" text-anchor="start" font-weight="bold">就地</text>
<line x1="905.6" y1="570.7" x2="1037.4" y2="570.7" stroke="#8c1044" stroke-width="1.3"/>
<line x1="905.6" y1="570.7" x2="905.6" y2="616" stroke="#c80000" stroke-width="1"/>
<line x1="1037.4" y1="570.7" x2="1037.4" y2="579" stroke="#c80000" stroke-width="1"/>
<path d="M1034 583 L1037.4 579 L1040.8 583 M1037.4 579 L1037.4 586.7" stroke="#10b050" fill="none" stroke-width="1"/>
<rect x="1035" y="586.7" width="5" height="11.2" rx="0.5" fill="#00d862"/>
<path d="M1037.4 598 L1037.4 606 M1034 602.5 L1037.4 606 L1040.8 602.5" stroke="#10b050" fill="none" stroke-width="1"/>
<line x1="1037.4" y1="606" x2="1037.4" y2="616" stroke="#c80000" stroke-width="1"/>
<text x="946" y="588" fill="#fff" font-size="11" text-anchor="start" font-weight="bold">调度范围</text>
<text x="1048" y="598.5" fill="#fff" font-size="11" text-anchor="start" font-weight="bold">1-2-02</text>
<text x="536" y="531" fill="#fff" font-size="11" text-anchor="middle" font-weight="bold">380kVar</text>
<line x1="530" y1="541.5" x2="542" y2="541.5" stroke="#c0104a" stroke-width="1.2"/>
<line x1="530" y1="550.4" x2="542" y2="550.4" stroke="#c0104a" stroke-width="1.2"/>
<line x1="536" y1="550.4" x2="536" y2="566.3" stroke="#9a0000" stroke-width="1"/>
<rect x="530.2" y="566.3" width="11.6" height="19.3" fill="none" stroke="#aaa" stroke-width="1"/>
<path d="M530.2 566.3 L541.8 585.6 M530.2 585.6 L541.8 566.3 M530.2 576 L541.8 576" stroke="#aaa" fill="none" stroke-width="0.8"/>
<line x1="536" y1="585.6" x2="536" y2="616" stroke="#9a0000" stroke-width="1"/>
<text x="525" y="583" fill="#fff" font-size="11" text-anchor="end" font-weight="bold">140-1</text>
<text x="605.4" y="531" fill="#fff" font-size="11" text-anchor="middle" font-weight="bold">380kVar</text>
<line x1="599.4" y1="541.5" x2="611.4" y2="541.5" stroke="#c0104a" stroke-width="1.2"/>
<line x1="599.4" y1="550.4" x2="611.4" y2="550.4" stroke="#c0104a" stroke-width="1.2"/>
<line x1="605.4" y1="550.4" x2="605.4" y2="566.3" stroke="#9a0000" stroke-width="1"/>
<rect x="599.6" y="566.3" width="11.6" height="19.3" fill="none" stroke="#aaa" stroke-width="1"/>
<path d="M599.6 566.3 L611.1999999999999 585.6 M599.6 585.6 L611.1999999999999 566.3 M599.6 576 L611.1999999999999 576" stroke="#aaa" fill="none" stroke-width="0.8"/>
<line x1="605.4" y1="585.6" x2="605.4" y2="616" stroke="#9a0000" stroke-width="1"/>
<text x="592" y="583" fill="#fff" font-size="11" text-anchor="end" font-weight="bold">140-2</text>
<text x="1358.4" y="531" fill="#fff" font-size="11" text-anchor="middle" font-weight="bold">380kVar</text>
<line x1="1352.4" y1="541.5" x2="1364.4" y2="541.5" stroke="#c0104a" stroke-width="1.2"/>
<line x1="1352.4" y1="550.4" x2="1364.4" y2="550.4" stroke="#c0104a" stroke-width="1.2"/>
<line x1="1358.4" y1="550.4" x2="1358.4" y2="566.3" stroke="#9a0000" stroke-width="1"/>
<rect x="1352.6000000000001" y="566.3" width="11.6" height="19.3" fill="none" stroke="#aaa" stroke-width="1"/>
<path d="M1352.6000000000001 566.3 L1364.2 585.6 M1352.6000000000001 585.6 L1364.2 566.3 M1352.6000000000001 576 L1364.2 576" stroke="#aaa" fill="none" stroke-width="0.8"/>
<line x1="1358.4" y1="585.6" x2="1358.4" y2="616" stroke="#9a0000" stroke-width="1"/>
<text x="1345" y="583" fill="#fff" font-size="11" text-anchor="end" font-weight="bold">240-1</text>
<text x="1422.2" y="531" fill="#fff" font-size="11" text-anchor="middle" font-weight="bold">380kVar</text>
<line x1="1416.2" y1="541.5" x2="1428.2" y2="541.5" stroke="#c0104a" stroke-width="1.2"/>
<line x1="1416.2" y1="550.4" x2="1428.2" y2="550.4" stroke="#c0104a" stroke-width="1.2"/>
<line x1="1422.2" y1="550.4" x2="1422.2" y2="566.3" stroke="#9a0000" stroke-width="1"/>
<rect x="1416.4" y="566.3" width="11.6" height="19.3" fill="none" stroke="#aaa" stroke-width="1"/>
<path d="M1416.4 566.3 L1428.0 585.6 M1416.4 585.6 L1428.0 566.3 M1416.4 576 L1428.0 576" stroke="#aaa" fill="none" stroke-width="0.8"/>
<line x1="1422.2" y1="585.6" x2="1422.2" y2="616" stroke="#9a0000" stroke-width="1"/>
<text x="1407.5" y="583" fill="#fff" font-size="11" text-anchor="end" font-weight="bold">240-2</text>
<line x1="504" y1="621.6" x2="932.6" y2="621.6" stroke="#c80000" stroke-width="1"/>
<line x1="1018.8" y1="621.6" x2="1447.2" y2="621.6" stroke="#c80000" stroke-width="1"/>
<circle cx="518.8" cy="621.6" r="5" fill="none" stroke="#ff0000" stroke-width="1"/>
<circle cx="535.9" cy="621.6" r="5" fill="none" stroke="#ff0000" stroke-width="1"/>
<circle cx="548.1" cy="621.6" r="5" fill="none" stroke="#ff0000" stroke-width="1"/>
<circle cx="605" cy="621.6" r="5" fill="none" stroke="#ff0000" stroke-width="1"/>
<circle cx="692.8" cy="621.6" r="5" fill="none" stroke="#ff0000" stroke-width="1"/>
<circle cx="754.5" cy="621.6" r="5" fill="none" stroke="#ff0000" stroke-width="1"/>
<circle cx="835.3" cy="621.6" r="5" fill="none" stroke="#ff0000" stroke-width="1"/>
<circle cx="905.6" cy="621.6" r="5" fill="none" stroke="#ff0000" stroke-width="1"/>
<circle cx="1037.5" cy="621.6" r="5" fill="none" stroke="#ff0000" stroke-width="1"/>
<circle cx="1047.5" cy="621.6" r="5" fill="none" stroke="#ff0000" stroke-width="1"/>
<circle cx="1194.9" cy="621.6" r="5" fill="none" stroke="#ff0000" stroke-width="1"/>
<circle cx="1207.5" cy="621.6" r="5" fill="none" stroke="#ff0000" stroke-width="1"/>
<circle cx="1340.6" cy="621.6" r="5" fill="none" stroke="#ff0000" stroke-width="1"/>
<circle cx="1358.4" cy="621.6" r="5" fill="none" stroke="#ff0000" stroke-width="1"/>
<circle cx="1422.2" cy="621.6" r="5" fill="none" stroke="#ff0000" stroke-width="1"/>
<line x1="518.8" y1="626.6" x2="518.8" y2="642.3" stroke="#c80000" stroke-width="1"/>
<path d="M515 638 L518.8 635 L522.6 638" stroke="#ff0000" fill="none" stroke-width="1"/>
<rect x="516.4" y="642.3" width="5" height="10.7" fill="none" stroke="#c80000" stroke-width="1"/>
<line x1="518.8" y1="653" x2="518.8" y2="668" stroke="#c80000" stroke-width="1"/>
<path d="M515 655.5 L518.8 658.8 L522.6 655.5" stroke="#ff0000" fill="none" stroke-width="1"/>
<path d="M514.3 668.5 L523.3 668.5 L518.8 672.5 Z M514.3 671.5 L518.8 676 L523.3 671.5" stroke="#ff0000" fill="none" stroke-width="1"/>
<text x="499" y="692.5" fill="#fff" font-size="11" text-anchor="start" font-weight="bold">1-2-03</text>
<line x1="548.1" y1="627" x2="548.1" y2="753.2" stroke="#9a0000" stroke-width="1"/>
<line x1="548.1" y1="653.0" x2="559.1" y2="653.0" stroke="#9a0000" stroke-width="1"/>
<rect x="559.1" y="648.0" width="31" height="10" rx="1.5" fill="#ffff00"/>
<line x1="590.1" y1="653.0" x2="612.1" y2="653.0" stroke="#9a0000" stroke-width="1"/>
<path d="M612.6 648.5 L612.6 657.5 M612.6 648.7 L616.6 653.0 L612.6 657.3 M615.6 648.7 L620.1 653.0 L615.6 657.3" stroke="#ff0000" fill="none" stroke-width="1.2"/>
<text x="630.8000000000001" y="657.5" fill="#fff" font-size="11" text-anchor="start" font-weight="bold">1001#</text>
<text x="560.1" y="644.0" fill="#fff" font-size="11" text-anchor="start" font-weight="bold">消防设备</text>
<line x1="548.1" y1="686.4" x2="559.1" y2="686.4" stroke="#9a0000" stroke-width="1"/>
<rect x="559.1" y="681.4" width="31" height="10" rx="1.5" fill="#00d862"/>
<line x1="590.1" y1="686.4" x2="612.1" y2="686.4" stroke="#9a0000" stroke-width="1"/>
<path d="M612.6 681.9 L612.6 690.9 M612.6 682.1 L616.6 686.4 L612.6 690.6999999999999 M615.6 682.1 L620.1 686.4 L615.6 690.6999999999999" stroke="#ff0000" fill="none" stroke-width="1.2"/>
<text x="630.8000000000001" y="690.9" fill="#fff" font-size="11" text-anchor="start" font-weight="bold">1002#</text>
<text x="560.1" y="677.4" fill="#fff" font-size="11" text-anchor="start" font-weight="bold">消防电梯</text>
<line x1="548.1" y1="719.8" x2="559.1" y2="719.8" stroke="#9a0000" stroke-width="1"/>
<rect x="559.1" y="714.8" width="31" height="10" rx="1.5" fill="#00d862"/>
<line x1="590.1" y1="719.8" x2="612.1" y2="719.8" stroke="#9a0000" stroke-width="1"/>
<path d="M612.6 715.3 L612.6 724.3 M612.6 715.5 L616.6 719.8 L612.6 724.0999999999999 M615.6 715.5 L620.1 719.8 L615.6 724.0999999999999" stroke="#ff0000" fill="none" stroke-width="1.2"/>
<text x="630.8000000000001" y="724.3" fill="#fff" font-size="11" text-anchor="start" font-weight="bold">1003#</text>
<text x="560.1" y="710.8" fill="#fff" font-size="11" text-anchor="start" font-weight="bold">应急照明</text>
<line x1="548.1" y1="753.2" x2="559.1" y2="753.2" stroke="#9a0000" stroke-width="1"/>
<rect x="559.1" y="748.2" width="31" height="10" rx="1.5" fill="#00d862"/>
<line x1="590.1" y1="753.2" x2="612.1" y2="753.2" stroke="#9a0000" stroke-width="1"/>
<path d="M612.6 748.7 L612.6 757.7 M612.6 748.9000000000001 L616.6 753.2 L612.6 757.5 M615.6 748.9000000000001 L620.1 753.2 L615.6 757.5" stroke="#ff0000" fill="none" stroke-width="1.2"/>
<text x="630.8000000000001" y="757.7" fill="#fff" font-size="11" text-anchor="start" font-weight="bold">1004#</text>
<text x="560.1" y="744.2" fill="#fff" font-size="11" text-anchor="start" font-weight="bold">备用</text>
<line x1="692.8" y1="627" x2="692.8" y2="753.2" stroke="#9a0000" stroke-width="1"/>
<line x1="692.8" y1="653.0" x2="703.8" y2="653.0" stroke="#9a0000" stroke-width="1"/>
<rect x="703.8" y="648.0" width="31" height="10" rx="1.5" fill="#00d862"/>
<line x1="734.8" y1="653.0" x2="756.8" y2="653.0" stroke="#9a0000" stroke-width="1"/>
<path d="M757.3 648.5 L757.3 657.5 M757.3 648.7 L761.3 653.0 L757.3 657.3 M760.3 648.7 L764.8 653.0 L760.3 657.3" stroke="#ff0000" fill="none" stroke-width="1.2"/>
<text x="774.8" y="657.5" fill="#fff" font-size="11" text-anchor="start" font-weight="bold">1005#</text>
<text x="704.8" y="644.0" fill="#fff" font-size="11" text-anchor="start" font-weight="bold">弱电机房</text>
<line x1="692.8" y1="686.4" x2="703.8" y2="686.4" stroke="#9a0000" stroke-width="1"/>
<line x1="734.8" y1="686.4" x2="756.8" y2="686.4" stroke="#9a0000" stroke-width="1"/>
<path d="M757.3 681.9 L757.3 690.9 M757.3 682.1 L761.3 686.4 L757.3 690.6999999999999 M760.3 682.1 L764.8 686.4 L760.3 690.6999999999999" stroke="#ff0000" fill="none" stroke-width="1.2"/>
<text x="774.8" y="690.9" fill="#fff" font-size="11" text-anchor="start" font-weight="bold">1006#</text>
<text x="704.8" y="677.4" fill="#fff" font-size="11" text-anchor="start" font-weight="bold">水泵房</text>
<line x1="692.8" y1="719.8" x2="703.8" y2="719.8" stroke="#9a0000" stroke-width="1"/>
<rect x="703.8" y="714.8" width="31" height="10" rx="1.5" fill="#00d862"/>
<line x1="734.8" y1="719.8" x2="756.8" y2="719.8" stroke="#9a0000" stroke-width="1"/>
<path d="M757.3 715.3 L757.3 724.3 M757.3 715.5 L761.3 719.8 L757.3 724.0999999999999 M760.3 715.5 L764.8 719.8 L760.3 724.0999999999999" stroke="#ff0000" fill="none" stroke-width="1.2"/>
<text x="774.8" y="724.3" fill="#fff" font-size="11" text-anchor="start" font-weight="bold">1007#</text>
<text x="704.8" y="710.8" fill="#fff" font-size="11" text-anchor="start" font-weight="bold">电梯1</text>
<line x1="692.8" y1="753.2" x2="703.8" y2="753.2" stroke="#9a0000" stroke-width="1"/>
<rect x="703.8" y="748.2" width="31" height="10" rx="1.5" fill="#00d862"/>
<line x1="734.8" y1="753.2" x2="756.8" y2="753.2" stroke="#9a0000" stroke-width="1"/>
<path d="M757.3 748.7 L757.3 757.7 M757.3 748.9000000000001 L761.3 753.2 L757.3 757.5 M760.3 748.9000000000001 L764.8 753.2 L760.3 757.5" stroke="#ff0000" fill="none" stroke-width="1.2"/>
<text x="774.8" y="757.7" fill="#fff" font-size="11" text-anchor="start" font-weight="bold">1008#</text>
<text x="704.8" y="744.2" fill="#fff" font-size="11" text-anchor="start" font-weight="bold">电梯2</text>
<line x1="835.3" y1="627" x2="835.3" y2="753.2" stroke="#9a0000" stroke-width="1"/>
<line x1="835.3" y1="653.0" x2="846.3" y2="653.0" stroke="#9a0000" stroke-width="1"/>
<rect x="846.3" y="648.0" width="31" height="10" rx="1.5" fill="#00d862"/>
<line x1="877.3" y1="653.0" x2="899.3" y2="653.0" stroke="#9a0000" stroke-width="1"/>
<path d="M899.8 648.5 L899.8 657.5 M899.8 648.7 L903.8 653.0 L899.8 657.3 M902.8 648.7 L907.3 653.0 L902.8 657.3" stroke="#ff0000" fill="none" stroke-width="1.2"/>
<text x="920.5" y="657.5" fill="#fff" font-size="11" text-anchor="start" font-weight="bold">1009#</text>
<text x="847.3" y="644.0" fill="#fff" font-size="11" text-anchor="start" font-weight="bold">景观照明</text>
<line x1="835.3" y1="686.4" x2="846.3" y2="686.4" stroke="#9a0000" stroke-width="1"/>
<rect x="846.3" y="681.4" width="31" height="10" rx="1.5" fill="#00d862"/>
<line x1="877.3" y1="686.4" x2="899.3" y2="686.4" stroke="#9a0000" stroke-width="1"/>
<path d="M899.8 681.9 L899.8 690.9 M899.8 682.1 L903.8 686.4 L899.8 690.6999999999999 M902.8 682.1 L907.3 686.4 L902.8 690.6999999999999" stroke="#ff0000" fill="none" stroke-width="1.2"/>
<text x="920.5" y="690.9" fill="#fff" font-size="11" text-anchor="start" font-weight="bold">1010#</text>
<text x="847.3" y="677.4" fill="#fff" font-size="11" text-anchor="start" font-weight="bold">办公楼配电1</text>
<line x1="835.3" y1="719.8" x2="846.3" y2="719.8" stroke="#9a0000" stroke-width="1"/>
<line x1="877.3" y1="719.8" x2="899.3" y2="719.8" stroke="#9a0000" stroke-width="1"/>
<path d="M899.8 715.3 L899.8 724.3 M899.8 715.5 L903.8 719.8 L899.8 724.0999999999999 M902.8 715.5 L907.3 719.8 L902.8 724.0999999999999" stroke="#ff0000" fill="none" stroke-width="1.2"/>
<text x="920.5" y="724.3" fill="#fff" font-size="11" text-anchor="start" font-weight="bold">1011#</text>
<text x="847.3" y="710.8" fill="#fff" font-size="11" text-anchor="start" font-weight="bold">办公楼配电2</text>
<line x1="835.3" y1="753.2" x2="846.3" y2="753.2" stroke="#9a0000" stroke-width="1"/>
<rect x="846.3" y="748.2" width="31" height="10" rx="1.5" fill="#00d862"/>
<line x1="877.3" y1="753.2" x2="899.3" y2="753.2" stroke="#9a0000" stroke-width="1"/>
<path d="M899.8 748.7 L899.8 757.7 M899.8 748.9000000000001 L903.8 753.2 L899.8 757.5 M902.8 748.9000000000001 L907.3 753.2 L902.8 757.5" stroke="#ff0000" fill="none" stroke-width="1.2"/>
<text x="920.5" y="757.7" fill="#fff" font-size="11" text-anchor="start" font-weight="bold">1012#</text>
<text x="847.3" y="744.2" fill="#fff" font-size="11" text-anchor="start" font-weight="bold">备用</text>
<line x1="1047.5" y1="627" x2="1047.5" y2="753.2" stroke="#9a0000" stroke-width="1"/>
<line x1="1047.5" y1="653.0" x2="1058.5" y2="653.0" stroke="#9a0000" stroke-width="1"/>
<rect x="1058.5" y="648.0" width="31" height="10" rx="1.5" fill="#00d862"/>
<line x1="1089.5" y1="653.0" x2="1111.5" y2="653.0" stroke="#9a0000" stroke-width="1"/>
<path d="M1112.0 648.5 L1112.0 657.5 M1112.0 648.7 L1116.0 653.0 L1112.0 657.3 M1115.0 648.7 L1119.5 653.0 L1115.0 657.3" stroke="#ff0000" fill="none" stroke-width="1.2"/>
<text x="1135.5" y="657.5" fill="#fff" font-size="11" text-anchor="start" font-weight="bold">1201#</text>
<text x="1059.5" y="644.0" fill="#fff" font-size="11" text-anchor="start" font-weight="bold">车间照明</text>
<line x1="1047.5" y1="686.4" x2="1058.5" y2="686.4" stroke="#9a0000" stroke-width="1"/>
<rect x="1058.5" y="681.4" width="31" height="10" rx="1.5" fill="#ff0000"/>
<line x1="1089.5" y1="686.4" x2="1111.5" y2="686.4" stroke="#9a0000" stroke-width="1"/>
<path d="M1112.0 681.9 L1112.0 690.9 M1112.0 682.1 L1116.0 686.4 L1112.0 690.6999999999999 M1115.0 682.1 L1119.5 686.4 L1115.0 690.6999999999999" stroke="#ff0000" fill="none" stroke-width="1.2"/>
<text x="1135.5" y="690.9" fill="#fff" font-size="11" text-anchor="start" font-weight="bold">1202#</text>
<text x="1059.5" y="677.4" fill="#fff" font-size="11" text-anchor="start" font-weight="bold">车间空调</text>
<line x1="1047.5" y1="719.8" x2="1058.5" y2="719.8" stroke="#9a0000" stroke-width="1"/>
<rect x="1058.5" y="714.8" width="31" height="10" rx="1.5" fill="#00d862"/>
<line x1="1089.5" y1="719.8" x2="1111.5" y2="719.8" stroke="#9a0000" stroke-width="1"/>
<path d="M1112.0 715.3 L1112.0 724.3 M1112.0 715.5 L1116.0 719.8 L1112.0 724.0999999999999 M1115.0 715.5 L1119.5 719.8 L1115.0 724.0999999999999" stroke="#ff0000" fill="none" stroke-width="1.2"/>
<text x="1135.5" y="724.3" fill="#fff" font-size="11" text-anchor="start" font-weight="bold">1203#</text>
<text x="1059.5" y="710.8" fill="#fff" font-size="11" text-anchor="start" font-weight="bold">应急照明</text>
<line x1="1047.5" y1="753.2" x2="1058.5" y2="753.2" stroke="#9a0000" stroke-width="1"/>
<rect x="1058.5" y="748.2" width="31" height="10" rx="1.5" fill="#00d862"/>
<line x1="1089.5" y1="753.2" x2="1111.5" y2="753.2" stroke="#9a0000" stroke-width="1"/>
<path d="M1112.0 748.7 L1112.0 757.7 M1112.0 748.9000000000001 L1116.0 753.2 L1112.0 757.5 M1115.0 748.9000000000001 L1119.5 753.2 L1115.0 757.5" stroke="#ff0000" fill="none" stroke-width="1.2"/>
<text x="1135.5" y="757.7" fill="#fff" font-size="11" text-anchor="start" font-weight="bold">1204#</text>
<text x="1059.5" y="744.2" fill="#fff" font-size="11" text-anchor="start" font-weight="bold">备用</text>
<line x1="1194.9" y1="627" x2="1194.9" y2="753.2" stroke="#9a0000" stroke-width="1"/>
<line x1="1194.9" y1="653.0" x2="1205.9" y2="653.0" stroke="#9a0000" stroke-width="1"/>
<rect x="1205.9" y="648.0" width="31" height="10" rx="1.5" fill="#00d862"/>
<line x1="1236.9" y1="653.0" x2="1258.9" y2="653.0" stroke="#9a0000" stroke-width="1"/>
<path d="M1259.4 648.5 L1259.4 657.5 M1259.4 648.7 L1263.4 653.0 L1259.4 657.3 M1262.4 648.7 L1266.9 653.0 L1262.4 657.3" stroke="#ff0000" fill="none" stroke-width="1.2"/>
<text x="1279.6000000000001" y="657.5" fill="#fff" font-size="11" text-anchor="start" font-weight="bold">1205#</text>
<text x="1206.9" y="644.0" fill="#fff" font-size="11" text-anchor="start" font-weight="bold">产线01</text>
<line x1="1194.9" y1="686.4" x2="1205.9" y2="686.4" stroke="#9a0000" stroke-width="1"/>
<rect x="1205.9" y="681.4" width="31" height="10" rx="1.5" fill="#00d862"/>
<line x1="1236.9" y1="686.4" x2="1258.9" y2="686.4" stroke="#9a0000" stroke-width="1"/>
<path d="M1259.4 681.9 L1259.4 690.9 M1259.4 682.1 L1263.4 686.4 L1259.4 690.6999999999999 M1262.4 682.1 L1266.9 686.4 L1262.4 690.6999999999999" stroke="#ff0000" fill="none" stroke-width="1.2"/>
<text x="1279.6000000000001" y="690.9" fill="#fff" font-size="11" text-anchor="start" font-weight="bold">1206#</text>
<text x="1206.9" y="677.4" fill="#fff" font-size="11" text-anchor="start" font-weight="bold">产线02</text>
<line x1="1194.9" y1="719.8" x2="1205.9" y2="719.8" stroke="#9a0000" stroke-width="1"/>
<rect x="1205.9" y="714.8" width="31" height="10" rx="1.5" fill="#00d862"/>
<line x1="1236.9" y1="719.8" x2="1258.9" y2="719.8" stroke="#9a0000" stroke-width="1"/>
<path d="M1259.4 715.3 L1259.4 724.3 M1259.4 715.5 L1263.4 719.8 L1259.4 724.0999999999999 M1262.4 715.5 L1266.9 719.8 L1262.4 724.0999999999999" stroke="#ff0000" fill="none" stroke-width="1.2"/>
<text x="1279.6000000000001" y="724.3" fill="#fff" font-size="11" text-anchor="start" font-weight="bold">1207#</text>
<text x="1206.9" y="710.8" fill="#fff" font-size="11" text-anchor="start" font-weight="bold">产线03</text>
<line x1="1194.9" y1="753.2" x2="1205.9" y2="753.2" stroke="#9a0000" stroke-width="1"/>
<rect x="1205.9" y="748.2" width="31" height="10" rx="1.5" fill="#00d862"/>
<line x1="1236.9" y1="753.2" x2="1258.9" y2="753.2" stroke="#9a0000" stroke-width="1"/>
<path d="M1259.4 748.7 L1259.4 757.7 M1259.4 748.9000000000001 L1263.4 753.2 L1259.4 757.5 M1262.4 748.9000000000001 L1266.9 753.2 L1262.4 757.5" stroke="#ff0000" fill="none" stroke-width="1.2"/>
<text x="1279.6000000000001" y="757.7" fill="#fff" font-size="11" text-anchor="start" font-weight="bold">1208#</text>
<text x="1206.9" y="744.2" fill="#fff" font-size="11" text-anchor="start" font-weight="bold">备用</text>
<line x1="1340.6" y1="627" x2="1340.6" y2="753.2" stroke="#9a0000" stroke-width="1"/>
<line x1="1340.6" y1="653.0" x2="1351.6" y2="653.0" stroke="#9a0000" stroke-width="1"/>
<rect x="1351.6" y="648.0" width="31" height="10" rx="1.5" fill="#00d862"/>
<line x1="1382.6" y1="653.0" x2="1404.6" y2="653.0" stroke="#9a0000" stroke-width="1"/>
<path d="M1405.1 648.5 L1405.1 657.5 M1405.1 648.7 L1409.1 653.0 L1405.1 657.3 M1408.1 648.7 L1412.6 653.0 L1408.1 657.3" stroke="#ff0000" fill="none" stroke-width="1.2"/>
<text x="1423.6" y="657.5" fill="#fff" font-size="11" text-anchor="start" font-weight="bold">1209#</text>
<text x="1352.6" y="644.0" fill="#fff" font-size="11" text-anchor="start" font-weight="bold">仓储照明</text>
<line x1="1340.6" y1="686.4" x2="1351.6" y2="686.4" stroke="#9a0000" stroke-width="1"/>
<rect x="1351.6" y="681.4" width="31" height="10" rx="1.5" fill="#ffff00"/>
<line x1="1382.6" y1="686.4" x2="1404.6" y2="686.4" stroke="#9a0000" stroke-width="1"/>
<path d="M1405.1 681.9 L1405.1 690.9 M1405.1 682.1 L1409.1 686.4 L1405.1 690.6999999999999 M1408.1 682.1 L1412.6 686.4 L1408.1 690.6999999999999" stroke="#ff0000" fill="none" stroke-width="1.2"/>
<text x="1423.6" y="690.9" fill="#fff" font-size="11" text-anchor="start" font-weight="bold">1210#</text>
<text x="1352.6" y="677.4" fill="#fff" font-size="11" text-anchor="start" font-weight="bold">仓储空调</text>
<line x1="1340.6" y1="719.8" x2="1351.6" y2="719.8" stroke="#9a0000" stroke-width="1"/>
<rect x="1351.6" y="714.8" width="31" height="10" rx="1.5" fill="#00d862"/>
<line x1="1382.6" y1="719.8" x2="1404.6" y2="719.8" stroke="#9a0000" stroke-width="1"/>
<path d="M1405.1 715.3 L1405.1 724.3 M1405.1 715.5 L1409.1 719.8 L1405.1 724.0999999999999 M1408.1 715.5 L1412.6 719.8 L1408.1 724.0999999999999" stroke="#ff0000" fill="none" stroke-width="1.2"/>
<text x="1423.6" y="724.3" fill="#fff" font-size="11" text-anchor="start" font-weight="bold">1211#</text>
<text x="1352.6" y="710.8" fill="#fff" font-size="11" text-anchor="start" font-weight="bold">数据中心</text>
<line x1="1340.6" y1="753.2" x2="1351.6" y2="753.2" stroke="#9a0000" stroke-width="1"/>
<rect x="1351.6" y="748.2" width="31" height="10" rx="1.5" fill="#00d862"/>
<line x1="1382.6" y1="753.2" x2="1404.6" y2="753.2" stroke="#9a0000" stroke-width="1"/>
<path d="M1405.1 748.7 L1405.1 757.7 M1405.1 748.9000000000001 L1409.1 753.2 L1405.1 757.5 M1408.1 748.9000000000001 L1412.6 753.2 L1408.1 757.5" stroke="#ff0000" fill="none" stroke-width="1.2"/>
<text x="1423.6" y="757.7" fill="#fff" font-size="11" text-anchor="start" font-weight="bold">1212#</text>
<text x="1352.6" y="744.2" fill="#fff" font-size="11" text-anchor="start" font-weight="bold">备用</text>
</svg></body></html>
